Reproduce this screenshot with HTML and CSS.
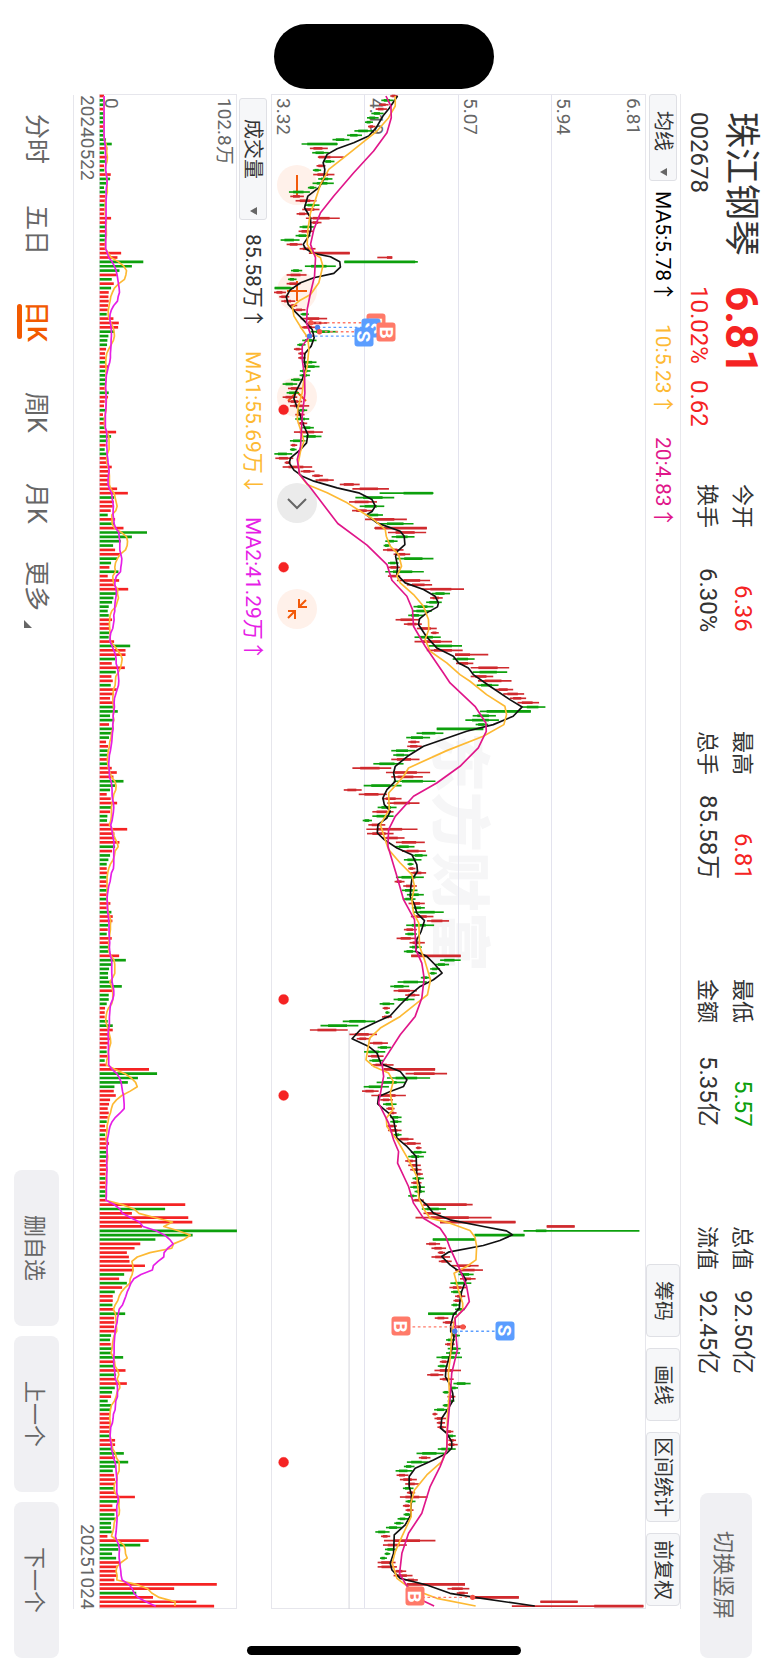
FILE: index.html
```html
<!DOCTYPE html>
<html lang="zh-CN">
<head>
<meta charset="utf-8">
<meta name="viewport" content="width=device-width, initial-scale=1">
<title>珠江钢琴 002678</title>
<link rel="stylesheet" href="styles.css">
</head>
<body>
<div class="screen">
  <header class="quote">
    <div class="quote-main">
      <h1 class="name">珠江钢琴</h1>
      <strong class="price">6.81</strong>
      <span class="code">002678</span>
      <span class="change"><span>10.02%</span><span>0.62</span></span>
    </div>
    <dl class="stats">
      <div class="stat"><dt>今开</dt><dd class="up">6.36</dd></div>
      <div class="stat"><dt>最高</dt><dd class="up">6.81</dd></div>
      <div class="stat"><dt>最低</dt><dd class="down">5.57</dd></div>
      <div class="stat"><dt>总值</dt><dd>92.50亿</dd></div>
      <div class="stat"><dt>换手</dt><dd>6.30%</dd></div>
      <div class="stat"><dt>总手</dt><dd>85.58万</dd></div>
      <div class="stat"><dt>金额</dt><dd>5.35亿</dd></div>
      <div class="stat"><dt>流值</dt><dd>92.45亿</dd></div>
    </dl>
    <button class="soft-button switch" type="button">切换竖屏</button>
  </header>

  <div class="toolbar price-bar">
    <div class="picker picker-short">
      <select aria-label="主图指标"><option>均线</option></select>
      <svg class="caret" viewBox="0 0 7 8" aria-hidden="true"><path d="M7 0v8L0 4z"/></svg>
    </div>
    <span class="legend">MA5:5.78↑</span>
    <span class="legend ma-mid">10:5.23↑</span>
    <span class="legend ma-long">20:4.83↑</span>
    <div class="tools">
      <button type="button">筹码</button>
      <button type="button">画线</button>
      <button type="button">区间统计</button>
      <button type="button">前复权</button>
    </div>
  </div>

  <section class="plot price-plot" aria-label="日K线">
    <div class="watermark">东方财富</div>
    <div class="controls">
      <button type="button" aria-label="缩小"><svg viewBox="0 0 40 40"><path d="M20 10v20"/></svg></button>
      <button type="button" aria-label="放大"><svg viewBox="0 0 40 40"><path d="M20 10v20M10 20h20"/></svg></button>
      <button type="button" aria-label="向左"><svg viewBox="0 0 40 40"><path d="M11 24l9-9 9 9"/></svg></button>
      <button class="grey" type="button" aria-label="向右"><svg viewBox="0 0 40 40"><path d="M11 16l9 9 9-9"/></svg></button>
      <button type="button" aria-label="退出全屏"><svg viewBox="0 0 40 40"><path d="M29 11l-7 7M22 10v8h8M11 29l7-7M11 22h7v8"/></svg></button>
    </div>
    <div class="bands">
      <div class="band"><span>6.81</span><span>5.94</span></div>
      <div class="band"><span>5.07</span></div>
      <div class="band"><span>4.19</span></div>
      <div class="band"><span>3.32</span></div>
    </div>
    <svg id="price" class="canvas" viewBox="811 284 1129 4543" preserveAspectRatio="none" aria-hidden="true"></svg>
    <div id="markers" class="markers"></div>
  </section>

  <div class="toolbar volume-bar">
    <div class="picker picker-long">
      <select aria-label="副图指标"><option>成交量</option></select>
      <svg class="caret" viewBox="0 0 7 8" aria-hidden="true"><path d="M7 0v8L0 4z"/></svg>
    </div>
    <span class="legend total">85.58万↑</span>
    <span class="legend ma-mid">MA1:55.69万↓</span>
    <span class="legend vol-long">MA2:41.29万↑</span>
  </div>

  <section class="plot volume-plot" aria-label="成交量">
    <div class="band"><span>102.8万</span><span>0</span></div>
    <svg id="volume" class="canvas" viewBox="297 284 411 4543" preserveAspectRatio="none" aria-hidden="true"></svg>
  </section>

  <div class="dates"><time>20240522</time><time>20251024</time></div>

  <footer class="bottom">
    <nav class="tabs">
      <a href="#minute">分时</a>
      <a href="#five">五日</a>
      <a class="active" href="#day" aria-current="page">日K</a>
      <a href="#week">周K</a>
      <a href="#month">月K</a>
      <a href="#more">更多<svg class="corner" viewBox="0 0 8 8" aria-hidden="true"><path d="M0 0v8h8z"/></svg></a>
    </nav>
    <button class="soft-button" type="button">删自选</button>
    <button class="soft-button" type="button">上一个</button>
    <button class="soft-button" type="button">下一个</button>
  </footer>

  <div class="island"></div>
  <div class="home-bar"></div>
</div>
<script src="chart.js"></script>
</body>
</html>
```
FILE: styles.css
```css
* { box-sizing: border-box; }

body {
  margin: 0;
  background: #fff;
  color: #333;
  font-family: Roboto, "Noto Sans CJK SC", sans-serif;
}

/* The screen is held in landscape: lines run downwards, rows stack right to left. */
.screen {
  position: relative;
  display: flex;
  flex-direction: column;
  width: 100%;
  height: 100vh;
  min-height: 1500px;
  overflow: hidden;
  writing-mode: vertical-rl;
  text-orientation: sideways;
  white-space: nowrap;
}

button, select {
  margin: 0;
  border: 0;
  padding: 0;
  background: none;
  color: inherit;
  font: inherit;
  writing-mode: vertical-rl;
  text-orientation: sideways;
  appearance: none;
}

.soft-button {
  border-radius: 8px;
  background: #f0f0f3;
  color: #666;
  font-size: 22px;
}

/* header */
.quote {
  display: flex;
  align-items: center;
  flex: none;
  block-size: 87px;
  padding-inline: 112px 11px;
}

.quote-main {
  display: grid;
  grid-template-columns: 144px auto;
  grid-template-rows: 42px 42px;
  justify-content: start;
  column-gap: 30px;
  align-items: center;
  inline-size: 372px;
  margin-block-start: 10px;
}

.name { margin: 0; font-size: 36px; font-weight: 400; line-height: 42px; }
.price { color: #f52323; font-size: 44px; line-height: 42px; }
.code, .change { font-size: 24px; line-height: 42px; }
.change { display: flex; gap: 16px; color: #f52323; }

.stats {
  display: grid;
  grid-template-columns: repeat(4, 148px);
  justify-content: space-between;
  flex: 0 1 890px;
  margin: 0;
}

.stat {
  display: flex;
  justify-content: space-between;
  align-items: center;
  line-height: 35px;
}

.stat dt { font-size: 22px; }
.stat dd { margin: 0; font-size: 24px; }
.up { color: #f52323; }
.down { color: #0da00d; }

.switch { block-size: 52px; inline-size: 165px; margin-inline-start: auto; margin-block-end: 3px; }

/* indicator rows */
.toolbar {
  display: flex;
  align-items: center;
  flex: none;
  gap: 22px;
  margin-inline: 94px 60px;
  font-size: 21px;
  line-height: 32px;
}

.price-bar { block-size: 35px; border-block-start: 1px solid #e8e8ec; }
.volume-bar { block-size: 34px; padding-inline-start: 4px; padding-block-start: 2px; }

.picker {
  position: relative;
  block-size: 28px;
  border: 1px solid #dfe0e5;
  border-radius: 3px;
  background: #f6f7f9;
  font-size: 20px;
}

.picker select { display: block; inline-size: 100%; block-size: 26px; line-height: 26px; }
.picker-short { inline-size: 87px; margin-inline-end: -12px; }
.picker-short select { padding-inline-start: 16px; }
.picker-long { inline-size: 122px; margin-inline-end: -8px; }
.picker-long select { padding-inline-start: 20px; }

.caret {
  position: absolute;
  inset-inline-end: 4px;
  inset-block-start: 9px;
  width: 7px;
  height: 8px;
  fill: #666;
  pointer-events: none;
}

.legend { color: #000; }
.total { color: #333; }
.ma-mid { color: #fdb933; }
.ma-long { color: #e0168a; }
.vol-long { color: #e61ee6; }

.tools { display: flex; gap: 11px; margin-inline: auto 3px; font-size: 20px; }

.tools button {
  block-size: 34px;
  min-inline-size: 73px;
  padding-inline: 4px;
  border: 1px solid #dfe0e5;
  border-radius: 4px;
  background: #f6f7f9;
}

/* charts */
.plot {
  position: relative;
  margin-inline: 94px 60px;
  border: 1px solid #e6e6ec;
  color: #666;
  font-size: 19px;
  line-height: 23px;
}

.price-plot { flex: 376 1 0; }
.volume-plot { flex: 137 1 0; }

.canvas {
  position: absolute;
  top: -1px;
  left: -1px;
  width: calc(100% + 2px);
  height: calc(100% + 2px);
  pointer-events: none;
}

.bands { display: flex; flex-direction: column; block-size: 100%; }

.band {
  display: flex;
  flex-direction: column;
  justify-content: space-between;
  flex: 1;
  padding-inline-start: 3px;
  border-block-end: 1px solid #e3e3ee;
}

.band:last-child { border-block-end: 0; }
.band span:only-child { margin-block-start: auto; }
.volume-plot .band { block-size: 100%; border: 0; }

.watermark {
  position: absolute;
  inset: 0;
  display: flex;
  align-items: center;
  justify-content: center;
  color: #f6f6f7;
  font-size: 60px;
  font-weight: 900;
}

.controls {
  position: absolute;
  inset-inline-start: 70px;
  inset-block-end: 5px;
  z-index: 1;
  display: flex;
  gap: 66px;
}

.controls button { width: 40px; height: 40px; border-radius: 50%; background: #fff1ea; }
.controls svg { display: block; width: 40px; height: 40px; fill: none; stroke: #f25a0a; stroke-width: 2; }
.controls .grey { background: #ebebeb; }
.controls .grey svg { stroke: #666; }
.bands, .price-plot .canvas, .markers { z-index: 2; }
.bands { position: relative; pointer-events: none; }

.markers { position: absolute; inset: 0; pointer-events: none; }

.marker {
  position: absolute;
  width: 19px;
  height: 19px;
  border-radius: 3px;
  color: #fff;
  font-size: 19px;
  font-weight: 700;
  line-height: 19px;
  text-align: center;
  transform: translate(-50%, -50%);
}

.buy { background: #ff7a69; }
.sell { background: #5b9dff; }

.red { fill: #f52323; stroke: #f52323; }
.green { fill: #0da00d; stroke: #0da00d; }
.candles .red { stroke: #d02a2e; }
.line { fill: none; stroke-width: 5; stroke-linejoin: round; }
.line-short { stroke: #111; }
.line-mid { stroke: #fdb933; }
.line-long { stroke: #e0168a; }
.line-vol { stroke: #e61ee6; }
.low-line { stroke: #d5d5dc; stroke-width: 3; }
.guide-buy { stroke: #ff7a69; stroke-width: 4; stroke-dasharray: 8 8; }
.guide-sell { stroke: #5b9dff; stroke-width: 4; stroke-dasharray: 8 8; }
.dot-buy { fill: #f55347; }
.dot-sell { fill: #4a7dea; }

.dates {
  display: flex;
  justify-content: space-between;
  flex: none;
  block-size: 26px;
  margin-inline: 95px 60px;
  border-block-end: 1px solid #e6e6ec;
  color: #666;
  font-size: 19px;
  line-height: 24px;
}

/* bottom bar */
.bottom {
  display: flex;
  align-items: center;
  gap: 10px;
  flex: none;
  block-size: 73px;
  padding-inline: 94px 11px;
}

.tabs { display: flex; margin-inline-end: auto; font-size: 25px; }

.tabs a {
  position: relative;
  display: flex;
  align-items: center;
  justify-content: center;
  inline-size: 91px;
  block-size: 73px;
  padding-block-end: 4px;
  color: #666;
  text-decoration: none;
}

.tabs .active { color: #f25a00; font-weight: 500; }

.tabs .active::after {
  content: "";
  position: absolute;
  inset-block-end: 17px;
  inset-inline: 28px;
  block-size: 5px;
  border-radius: 3px;
  background: #f25a00;
}

.corner { width: 8px; height: 8px; margin-inline-start: 9px; margin-block-start: 22px; fill: #666; }

.bottom .soft-button { flex: none; inline-size: 156px; block-size: 45px; }

/* device overlays */
.island, .home-bar { position: absolute; left: 50%; background: #000; transform: translateX(-50%); z-index: 3; }
.island { top: 24px; width: 220px; height: 65px; border-radius: 33px; }
.home-bar { bottom: 14px; width: 274px; height: 9px; border-radius: 5px; }
```
FILE: chart.js
```js
// One unit is a third of a pixel at the base size. Candle: colour, low-high.
const STEP = 13.088, FIRST = 290;
const rowY = i => FIRST + i * STEP;

const candles = `r1170-1192 g1143-1180 r1136-1165 r1126-1160 g1113-1150 g1100-1135 g1094-1118 r1103-1125 g1062-1120 g1040-1085
g996-1047 g903-1012 r928-982 g935-985 r952-1030 g968-1002 r948-975 g937-962 r938-1002 g953-996
g936-1000 g922-948 g865-928 r869-910 r885-948 g912-957 r905-957 r888-925 r916-1018 r930-963
g897-940 r894-938 g885-930 g840-897 r858-905 r897-945 r925-1048 r1131-1176 g1032-1253 g913-1006
g871-905 r858-918 g862-888 r858-900 g822-880 r820-856 r836-866 r842-884 r868-890 r880-915
g900-925 r900-980 r922-980 r898-950 g930-1012 r915-940 g905-948 g890-915 r880-905 r893-915
r893-915 g905-948 g908-957 g898-930 g897-928 g871-908 g846-890 r862-905 g858-895 r846-890
r862-905 r868-926 g893-920 r884-912 g884-926 r892-920 g905-940 r880-967 g905-963 g868-915
r870-890 g868-888 g821-875 r824-878 r852-870 r846-935 r900-942 r935-967 r945-1000 r1018-1078
r1056-1166 g1138-1300 g1065-1182 r1046-1130 g1078-1152 r1055-1118 g1100-1148 r1094-1220 g1140-1240 r1122-1280
r1163-1278 g1174-1243 g1155-1192 g1150-1172 r1148-1210 r1180-1230 g1190-1300 g1163-1195 r1163-1200 g1155-1271
r1163-1200 r1190-1290 r1220-1296 r1265-1392 g1295-1350 r1290-1328 g1278-1325 g1240-1300 g1237-1295 g1224-1270
r1186-1260 r1211-1265 r1250-1310 r1292-1316 g1243-1322 r1243-1356 g1285-1386 r1280-1388 r1365-1465 g1358-1424
r1368-1420 r1412-1528 g1418-1522 r1412-1480 r1434-1535 g1430-1496 r1485-1540 r1510-1573 r1530-1579 r1553-1618
g1567-1637 g1440-1593 g1418-1488 g1396-1497 g1427-1465 g1310-1450 g1249-1330 g1218-1290 r1224-1258 r1221-1265
g1173-1245 g1179-1225 r1173-1258 g1119-1210 r1056-1173 r1157-1290 r1173-1268 g1180-1306 g1090-1204 r1030-1084
r1075-1160 r1145-1204 r1161-1258 g1132-1189 r1116-1180 g1116-1180 g1087-1115 r1104-1155 r1098-1252 r1100-1180
r1145-1213 r1187-1274 g1185-1243 r1205-1277 g1235-1281 g1211-1264 g1222-1240 r1224-1246 r1230-1278 g1187-1271
r1183-1213 r1209-1250 g1205-1252 g1220-1271 g1208-1246 r1225-1274 g1235-1274 g1240-1331 r1232-1300 r1280-1347
g1218-1302 r1211-1250 g1215-1250 r1189-1250 r1228-1274 g1228-1265 g1211-1250 r1233-1382 g1320-1382 g1305-1347
g1290-1320 g1288-1310 g1262-1290 g1192-1280 g1170-1227 r1180-1250 r1215-1258 g1180-1243 g1138-1182 r1147-1169
g1155-1168 r1145-1175 g1027-1125 g960-1074 r928-1042 r1047-1130 r1069-1110 r1107-1163 g1132-1172 g1091-1155
r1103-1150 g1107-1150 r1112-1180 r1150-1305 r1216-1341 g1160-1290 g1129-1215 g1090-1166 r1085-1135 r1113-1217
r1140-1178 g1148-1189 r1158-1183 r1165-1189 g1170-1204 g1170-1204 r1158-1190 r1163-1204 g1180-1204 r1190-1240
r1210-1262 r1247-1264 g1232-1278 g1224-1271 r1215-1248 r1224-1262 r1230-1264 r1245-1268 g1237-1271 r1233-1264
g1230-1274 g1243-1274 g1224-1250 r1236-1271 r1270-1418 g1265-1338 r1270-1322 r1246-1475 r1320-1547 r1641-1725
g1571-1920 g1424-1574 g1298-1425 r1278-1320 r1294-1338 r1313-1335 r1294-1350 r1316-1355 r1355-1436 r1365-1449
g1375-1421 r1380-1427 g1351-1414 r1348-1400 g1353-1385 r1365-1396 r1360-1385 g1354-1378 g1365-1395 g1284-1370
r1304-1345 r1328-1365 r1360-1398 r1350-1370 g1355-1380 g1338-1365 r1335-1364 g1343-1382 g1338-1380 g1309-1386
r1319-1347 g1313-1342 r1303-1383 r1281-1330 r1319-1361 g1360-1412 g1350-1374 g1328-1350 r1342-1366 g1343-1363
g1328-1350 g1302-1345 r1297-1312 r1303-1338 r1310-1335 r1312-1338 r1335-1360 g1340-1367 r1345-1368 r1340-1373
g1313-1367 g1249-1335 r1256-1291 g1220-1284 g1211-1243 g1186-1237 r1189-1225 r1199-1250 r1215-1256 g1208-1240
r1220-1245 r1199-1282 g1216-1246 r1208-1235 r1216-1240 g1210-1235 g1192-1225 g1182-1210 g1157-1205 g1125-1168
r1142-1170 r1151-1306 r1148-1220 g1154-1190 g1153-1170 g1139-1160 r1132-1186 r1132-1190 r1180-1218 r1180-1237
r1215-1253 r1220-1395 r1342-1408 r1370-1404 r1420-1557 r1622-1734 r1536-1932`.split(/\s+/);

// Index -> where the thick part of the candle lies when it is not the middle.
const bodies = {
  11: [920, 1010], 14: [955, 990], 36: [940, 1048], 37: [1160, 1176], 38: [1032, 1245], 44: [822, 870], 91: [1210, 1298],
  99: [1124, 1280], 128: [1365, 1410], 141: [1460, 1593], 145: [1310, 1450], 197: [1233, 1382], 223: [1150, 1305],
  254: [1270, 1400], 258: [1320, 1547], 259: [1641, 1725], 260: [1608, 1640], 261: [1424, 1574], 262: [1298, 1425],
  279: [1284, 1370], 341: [1220, 1395], 344: [1420, 1557], 345: [1622, 1734], 346: [1784, 1932]
};

const volumes = `r312 g311 g312 r311 g312 g312 g314 r310 g313 g312 g318 g335 r322 g312 r322 g315 r312 g312 r332 g330
g318 g312 g316 r316 r316 g316 r314 r312 r333 r318 g315 r316 g315 g318 r315 r315 r363 r352 g429 g395
g358 r350 g335 r341 g333 r326 r325 r326 r324 r323 g320 r340 r356 r354 g342 g325 g322 g321 r318 r315
r316 g316 r325 g316 g315 g316 g315 r315 g326 r324 r314 r312 g316 r309 g314 r316 g317 r348 g333 g322
r317 g314 g323 r323 r323 r335 r329 r328 r325 r325 r351 r383 g342 r341 r338 r332 g323 r345 g343 r370
g440 g395 g362 g339 r345 r360 g352 g333 r328 g355 r323 r357 r345 r384 g350 g340 g336 g326 g323 g326
r336 r330 r330 g327 g326 r342 g390 r376 r376 g345 r335 r374 g347 r334 r338 g332 r350 r342 r330 r340
g340 g353 g330 g340 r327 g338 g333 g327 r318 r324 g323 g322 r322 g323 r335 r350 r340 g370 g345 g330
r320 r332 r351 g335 r330 g322 g321 r330 r381 r343 r345 r358 g345 r336 g330 g325 g320 r320 r321 g320
r322 r320 g322 r320 g320 r331 r320 g334 r338 r337 g325 r323 g320 r335 r326 g324 g325 r357 g377 g336
g327 g324 g324 g335 g365 r340 g326 g326 g320 r315 r314 r314 g323 g338 r338 r327 r330 r326 r320 g320
r322 g314 r320 r446 g470 g413 g383 g343 r341 r347 r330 r327 r323 r326 r323 g320 r315 r320 g315 r322
r327 r322 g320 g322 r317 r320 r320 r316 g318 r317 r317 g320 g318 r320 r554 g494 r395 r563 r575 r425
g708 g576 g465 r420 r403 r380 r386 r388 r434 r400 g372 r357 g380 r366 g344 r338 r338 g337 r342 g375
r342 r343 r342 r348 g333 g330 r332 g335 g335 g369 r345 g340 r376 g348 r345 r380 g344 g336 r333 g323
g334 g330 r330 r330 r330 r330 r332 g330 r345 r345 g338 g371 r345 g384 g348 g338 r342 r345 r343 g343
r345 r404 g352 r337 r350 g343 g346 g333 g333 g335 r322 r445 g420 g355 g336 g348 r358 r352 r348 r350
r343 r648 r521 g408 r458 r587 r640`.split(/\s+/);

const shortLine = `1192,290 1168,325 1148,350 1128,385 1105,410 1060,430 1010,448 980,465 968,490 973,510 970,540 955,565 922,590 912,625 930,655 931,690 925,710 908,735 915,748 940,762 990,772 1018,787 1020,803 1000,822 940,835 900,850 868,872 857,892 863,915 885,938 915,968 935,990 941,1015 932,1040 913,1062 911,1085 916,1110 905,1140 885,1178 880,1198 890,1225 900,1250 908,1275 922,1305 918,1330 900,1350 870,1375 866,1390 880,1412 905,1430 940,1445 1010,1465 1075,1480 1115,1500 1125,1520 1115,1536 1098,1546 1130,1570 1200,1595 1212,1610 1214,1635 1192,1655 1186,1670 1192,1700 1190,1725 1215,1750 1270,1770 1305,1790 1315,1810 1312,1822 1280,1840 1258,1858 1255,1875 1278,1910 1310,1945 1360,1970 1376,1990 1405,2005 1420,2025 1470,2060 1530,2100 1567,2122 1540,2150 1480,2175 1400,2195 1270,2240 1222,2270 1185,2300 1180,2320 1185,2345 1160,2370 1148,2395 1152,2415 1170,2435 1160,2455 1133,2475 1131,2500 1152,2520 1190,2545 1235,2565 1250,2595 1252,2615 1235,2640 1232,2660 1230,2690 1243,2715 1250,2740 1273,2763 1263,2795 1250,2820 1247,2855 1280,2870 1305,2895 1326,2920 1300,2940 1260,2960 1230,2985 1200,3015 1170,3048 1125,3068 1080,3090 1055,3117 1105,3140 1130,3160 1142,3192 1200,3215 1220,3240 1210,3260 1170,3275 1135,3290 1132,3312 1165,3340 1180,3360 1190,3415 1220,3440 1248,3470 1250,3530 1260,3560 1256,3595 1280,3615 1300,3640 1350,3660 1450,3680 1520,3693 1538,3705 1500,3722 1450,3737 1345,3757 1325,3770 1350,3795 1385,3820 1398,3840 1385,3875 1380,3900 1378,3925 1360,3945 1352,3975 1352,3995 1362,4010 1355,4050 1345,4080 1338,4105 1336,4130 1350,4155 1358,4180 1360,4200 1345,4225 1325,4255 1322,4285 1340,4300 1355,4325 1355,4345 1340,4360 1300,4380 1245,4405 1227,4430 1227,4460 1234,4485 1232,4545 1215,4575 1182,4605 1180,4660 1170,4690 1175,4710 1200,4735 1280,4755 1350,4780 1430,4793 1520,4806 1605,4818`;

const midLine = `1185,290 1185,320 1165,355 1130,395 1080,435 1030,475 985,510 960,555 945,600 930,640 922,690 920,735 935,760 960,775 967,800 955,850 930,885 895,905 875,922 880,950 905,990 922,1015 925,1050 920,1100 910,1140 905,1180 892,1225 890,1260 903,1300 910,1325 900,1355 893,1390 897,1425 920,1455 980,1480 1040,1510 1120,1560 1155,1590 1158,1610 1170,1640 1195,1665 1204,1700 1190,1730 1200,1750 1240,1785 1270,1820 1285,1860 1286,1890 1275,1920 1290,1955 1340,1990 1380,2025 1410,2045 1460,2085 1515,2120 1520,2145 1512,2175 1450,2210 1340,2253 1225,2305 1210,2330 1188,2355 1165,2380 1167,2430 1140,2475 1158,2530 1165,2550 1200,2590 1235,2625 1243,2660 1235,2700 1240,2740 1256,2770 1258,2840 1273,2880 1282,2910 1291,2940 1282,2985 1250,3010 1200,3050 1140,3085 1108,3115 1097,3180 1120,3200 1165,3220 1179,3245 1170,3280 1178,3330 1158,3355 1160,3380 1190,3420 1225,3480 1250,3530 1256,3595 1272,3630 1290,3655 1350,3670 1410,3692 1425,3712 1430,3740 1428,3780 1400,3800 1362,3820 1375,3870 1388,3910 1388,3930 1365,3955 1355,4000 1352,4060 1345,4120 1348,4180 1342,4250 1340,4350 1325,4385 1280,4425 1243,4470 1232,4510 1233,4550 1205,4610 1185,4655 1176,4690 1190,4735 1230,4765 1310,4795 1427,4818`;

const longLine = `1157,290 1172,320 1173,355 1160,400 1120,455 1060,520 1000,590 960,640 940,690 930,735 945,775 942,830 930,880 920,930 918,970 930,1005 905,1040 905,1080 912,1130 913,1180 905,1250 900,1340 890,1380 897,1425 930,1465 1012,1572 1100,1637 1160,1695 1175,1742 1220,1790 1237,1830 1240,1880 1275,1940 1330,2020 1350,2050 1425,2120 1458,2170 1459,2195 1435,2245 1380,2300 1310,2350 1240,2390 1185,2450 1165,2490 1163,2540 1178,2590 1190,2630 1210,2700 1243,2760 1247,2850 1265,2890 1272,2935 1265,2995 1245,3050 1200,3105 1145,3190 1150,3230 1135,3310 1165,3370 1180,3420 1195,3455 1192,3490 1225,3560 1240,3610 1270,3655 1320,3685 1337,3710 1350,3745 1380,3810 1400,3860 1408,3905 1395,3925 1365,3955 1367,4000 1372,4050 1355,4120 1350,4200 1342,4290 1340,4350 1320,4400 1290,4460 1265,4540 1225,4600 1205,4660 1198,4720 1215,4750 1243,4790 1302,4818`;

// Trades: side, badge x, row y, x of the dot on the candle.
const trades = [
  ['B', 1125, 970, 931], ['S', 1112, 984, 951], ['B', 1157, 997, 957], ['S', 1089, 1010, 927],
  ['B', 1201, 3981, 1389], ['S', 1516, 3994, 1364], ['B', 1243, 4792, 1418]
];
const eventRows = [1231, 1703, 2999, 3287, 4387];

const hue = token => (token[0] === 'r' ? 'red' : 'green');
const bar = (x1, x2, y, width, cls) => `<path class="${cls}" stroke-width="${width}" d="M${x1} ${y}H${x2}"/>`;
const poly = (points, cls) => `<polyline class="line ${cls}" points="${points}"/>`;

let price = '<path class="low-line" d="M1046 3092V4827"/><g class="candles">';
candles.forEach((token, i) => {
  const [low, high] = token.slice(1).split('-').map(Number);
  const span = high - low;
  const [from, to] = bodies[i] || [low + span * 0.2, low + span * 0.7];
  price += bar(low, high, rowY(i), 5, hue(token)) + bar(from, to, rowY(i), 8, hue(token));
});
price += '</g>' + poly(shortLine, 'line-short') + poly(midLine, 'line-mid') + poly(longLine, 'line-long');
eventRows.forEach(y => { price += `<circle class="red" stroke="none" cx="849" cy="${y}" r="15"/>`; });

let badges = '';
trades.forEach(([side, x, y, dot]) => {
  const kind = side === 'B' ? 'buy' : 'sell';
  price += `<path class="guide-${kind}" d="M${dot} ${y}H${x}"/><circle class="dot-${kind}" cx="${dot}" cy="${y}" r="8"/>`;
  badges += `<span class="marker ${kind}" style="left:${(x - 811) / 11.29}%;top:${(y - 284) / 45.43}%">${side}</span>`;
});
document.getElementById('price').innerHTML = price;
document.getElementById('markers').innerHTML = badges;

const BASE = 299;
const sizes = volumes.map(token => Number(token.slice(1)));
const average = days => sizes.map((_, i) => {
  const part = sizes.slice(Math.max(0, i - days + 1), i + 1);
  return `${Math.round(part.reduce((a, b) => a + b) / part.length)},${rowY(i)}`;
}).join(' ');

document.getElementById('volume').innerHTML =
  volumes.map((token, i) => bar(BASE, sizes[i], rowY(i), 8, hue(token))).join('') +
  poly(average(5), 'line-mid') + poly(average(10), 'line-vol');
```
